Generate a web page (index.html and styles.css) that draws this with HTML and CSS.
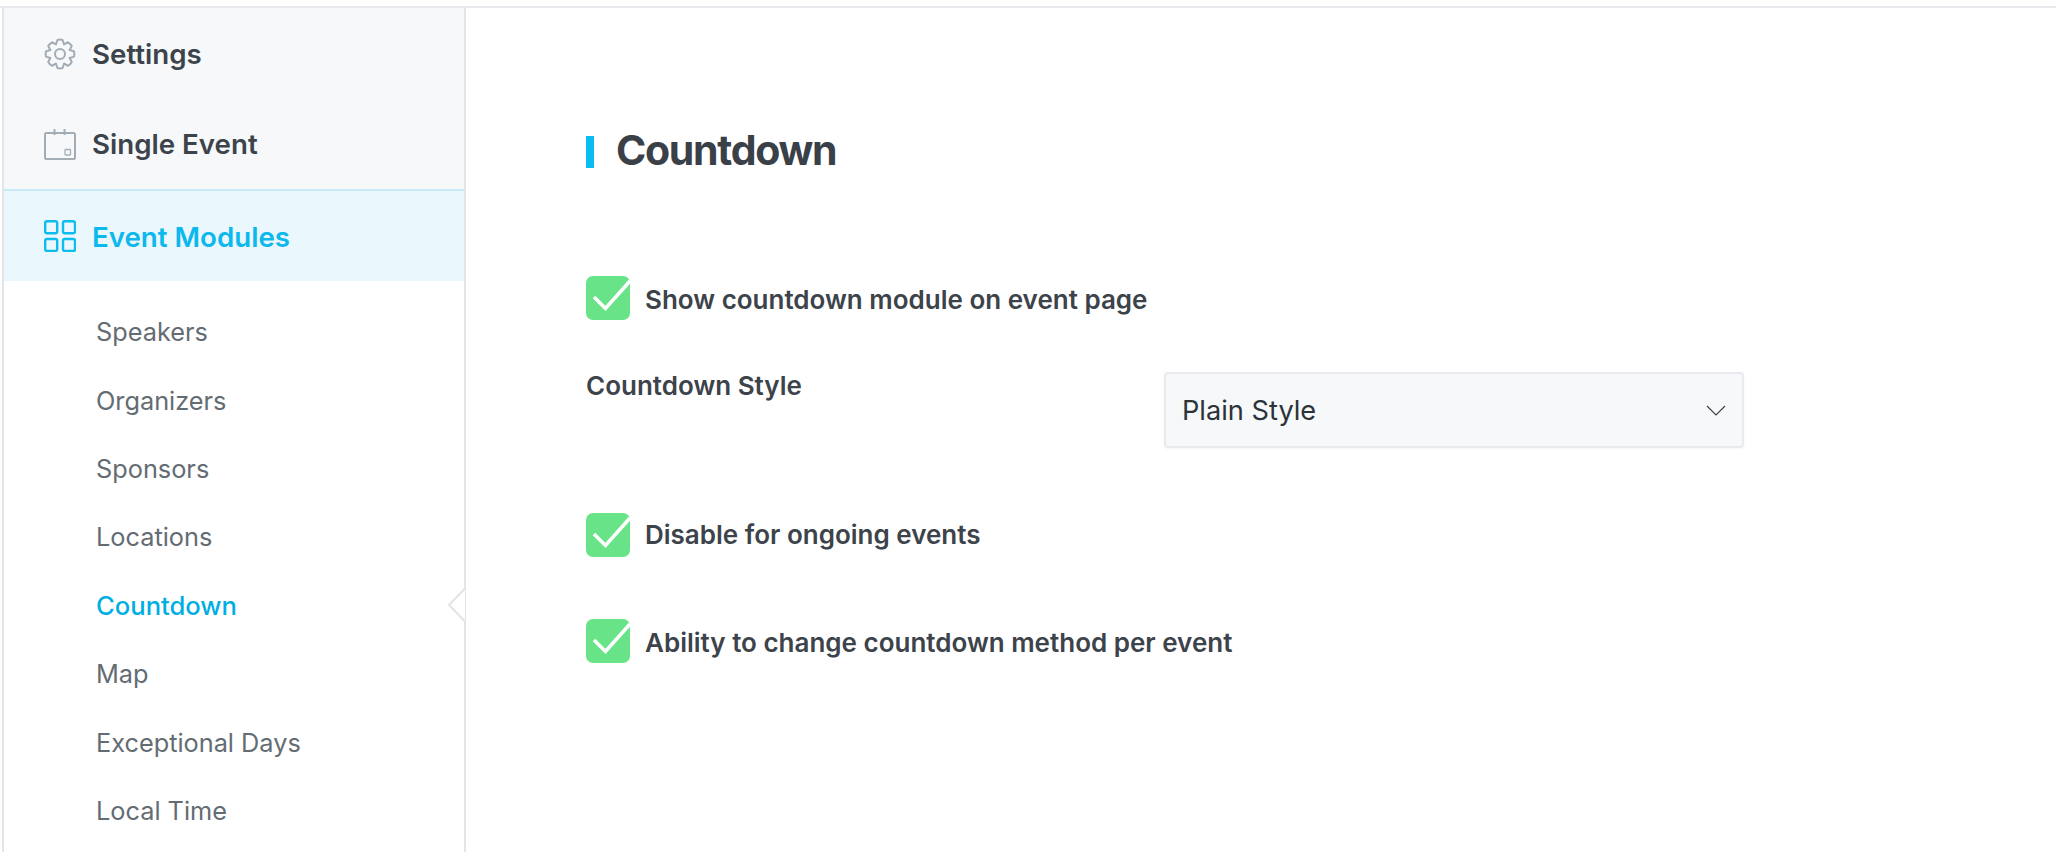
FILE: index.html
```html
<!DOCTYPE html>
<html lang="en">
<head>
<meta charset="utf-8">
<title>Countdown</title>
<link rel="stylesheet" href="styles.css">
</head>
<body>
<div class="page">
  <aside class="sidebar">
    <nav class="top-nav">
      <a class="top-item">
        <svg class="icon" viewBox="0 0 32 32" fill="none" stroke="#a3adb6" stroke-width="2" stroke-linejoin="round" stroke-linecap="round">
          <circle cx="16" cy="16" r="5"/>
          <g><path d="M11.98 6.3 L13.4 2 Q16 1.2 18.6 2 L20.02 6.3"/></g>
          <g transform="rotate(45 16 16)"><path d="M11.98 6.3 L13.4 2 Q16 1.2 18.6 2 L20.02 6.3"/></g>
          <g transform="rotate(90 16 16)"><path d="M11.98 6.3 L13.4 2 Q16 1.2 18.6 2 L20.02 6.3"/></g>
          <g transform="rotate(135 16 16)"><path d="M11.98 6.3 L13.4 2 Q16 1.2 18.6 2 L20.02 6.3"/></g>
          <g transform="rotate(180 16 16)"><path d="M11.98 6.3 L13.4 2 Q16 1.2 18.6 2 L20.02 6.3"/></g>
          <g transform="rotate(225 16 16)"><path d="M11.98 6.3 L13.4 2 Q16 1.2 18.6 2 L20.02 6.3"/></g>
          <g transform="rotate(270 16 16)"><path d="M11.98 6.3 L13.4 2 Q16 1.2 18.6 2 L20.02 6.3"/></g>
          <g transform="rotate(315 16 16)"><path d="M11.98 6.3 L13.4 2 Q16 1.2 18.6 2 L20.02 6.3"/></g>
        </svg>
        <span class="top-label">Settings</span>
      </a>
      <a class="top-item">
        <svg class="icon" viewBox="0 0 32 32" fill="none" stroke="#a3adb6">
          <rect x="1" y="5" width="30" height="26" rx="1.5" stroke-width="2"/>
          <path d="M10.5 1v6M20.5 1v6" stroke-width="2"/>
          <rect x="21" y="21.5" width="5.5" height="5.5" rx="0.8" stroke-width="1.3"/>
        </svg>
        <span class="top-label">Single Event</span>
      </a>
    </nav>
    <a class="top-item top-item-active">
      <svg class="icon" viewBox="0 0 32 32" fill="none" stroke="#0fbcee" stroke-width="2.4">
        <rect x="1.2" y="1.2" width="12" height="12" rx="1.8"/>
        <rect x="19" y="1.2" width="12" height="12" rx="1.8"/>
        <rect x="1.2" y="19" width="12" height="12" rx="1.8"/>
        <rect x="19" y="19" width="12" height="12" rx="1.8"/>
      </svg>
      <span class="top-label">Event Modules</span>
    </a>
    <ul class="sub-nav">
      <li class="sub-item">Speakers</li>
      <li class="sub-item">Organizers</li>
      <li class="sub-item">Sponsors</li>
      <li class="sub-item">Locations</li>
      <li class="sub-item sub-item-active">Countdown
        <svg class="pointer" viewBox="0 0 20 34" fill="#fff" stroke="#e1e4e8" stroke-width="2"><path d="M19 0.5 L3 17 L19 33.5"/></svg>
      </li>
      <li class="sub-item">Map</li>
      <li class="sub-item">Exceptional Days</li>
      <li class="sub-item">Local Time</li>
    </ul>
  </aside>
  <main class="content">
    <h2 class="title"><span class="title-text">Countdown</span></h2>
    <label class="check-row">
      <svg class="check" viewBox="0 0 44 44"><rect width="44" height="44" rx="7" fill="#68e387"/><path d="M8 21 L19.5 32.5 L44 5" fill="none" stroke="#fff" stroke-width="3.6"/></svg>
      <span class="check-label">Show countdown module on event page</span>
    </label>
    <div class="field-row">
      <div class="field-label">Countdown Style</div>
      <div class="select">
        <span>Plain Style</span>
        <svg class="chevron" viewBox="0 0 20 11" fill="none" stroke="#3c434a" stroke-width="1.2"><path d="M1 1 L10 10 L19 1"/></svg>
      </div>
    </div>
    <label class="check-row check-row-second">
      <svg class="check" viewBox="0 0 44 44"><rect width="44" height="44" rx="7" fill="#68e387"/><path d="M8 21 L19.5 32.5 L44 5" fill="none" stroke="#fff" stroke-width="3.6"/></svg>
      <span class="check-label">Disable for ongoing events</span>
    </label>
    <label class="check-row check-row-third">
      <svg class="check" viewBox="0 0 44 44"><rect width="44" height="44" rx="7" fill="#68e387"/><path d="M8 21 L19.5 32.5 L44 5" fill="none" stroke="#fff" stroke-width="3.6"/></svg>
      <span class="check-label">Ability to change countdown method per event</span>
    </label>
  </main>
</div>
</body>
</html>
```
FILE: styles.css
```css
* { box-sizing: border-box; }
html, body { margin: 0; padding: 0; height: 100%; overflow: hidden; background: #fff; }
body { font-family: Inter, "Liberation Sans", sans-serif; color: #3c434a; }

.page {
  display: flex;
  height: 852px;
  margin-top: 6px;
  border-top: 2px solid #e8eaed;
}

.sidebar {
  width: 464px;
  margin-left: 2px;
  flex: none;
  border-left: 2px solid #e3e5e8;
  border-right: 2px solid #e3e5e8;
}

.top-nav { background: #f6f8fa; height: 181px; padding-top: 1px; }

.top-item {
  display: flex;
  align-items: center;
  gap: 16px;
  height: 90px;
  padding-left: 40px;
  font-size: 27.7px;
  font-weight: 600;
  color: #3c434a;
}

.top-label { padding-bottom: 1px; }

.icon { width: 32px; height: 32px; flex: none; }

.top-item-active {
  height: 92px;
  border-top: 2px solid #c9e9f6;
  background: #eaf7fd;
  color: #0cb8ec;
}

.top-item-active .top-label { padding-top: 2px; padding-bottom: 0; }

.sub-nav { list-style: none; margin: 0; padding: 16.5px 0 0; }

.sub-item {
  position: relative;
  display: flex;
  align-items: center;
  height: 68.4px;
  padding-left: 92px;
  font-size: 25.3px;
  color: #646c73;
}

.sub-item-active { color: #00afe1; font-weight: 500; font-size: 25.6px; }

.pointer {
  position: absolute;
  right: -2px;
  top: 17px;
  width: 20px;
  height: 34px;
}

.content { flex: 1; padding: 128px 0 0 120px; }

.title {
  display: flex;
  align-items: center;
  height: 32px;
  margin: 0;
  padding-left: 22px;
  border-left: 8px solid #0cbbef;
  font-size: 41px;
  font-weight: 700;
  letter-spacing: -1.3px;
  color: #3a4048;
}

.title-text { margin-top: -4px; }

.check-row {
  display: flex;
  align-items: center;
  gap: 15px;
  height: 44px;
  margin-top: 108px;
  font-size: 26px;
  font-weight: 600;
  color: #3c434a;
}

.check-label { padding-top: 2px; }

.check { width: 44px; height: 44px; flex: none; }

.field-row { display: flex; margin-top: 52px; height: 76px; }

.field-label {
  width: 578px;
  padding-top: 1px;
  line-height: 26px;
  font-size: 26px;
  font-weight: 600;
}

.select {
  display: flex;
  align-items: center;
  justify-content: space-between;
  width: 580px;
  height: 76px;
  padding: 0 16px 0 16px;
  border: 2px solid #e8eaed;
  border-radius: 4px;
  background: #f6f8fa;
  box-shadow: 0 1px 3px rgba(0, 0, 0, 0.04);
  font-size: 27.2px;
  color: #2c3338;
}

.chevron { width: 20px; height: 11px; }

.check-row-second { margin-top: 65px; }
.check-row-second .check-label { padding-top: 0; padding-bottom: 2px; }
.check-row-third { margin-top: 62px; }
```
